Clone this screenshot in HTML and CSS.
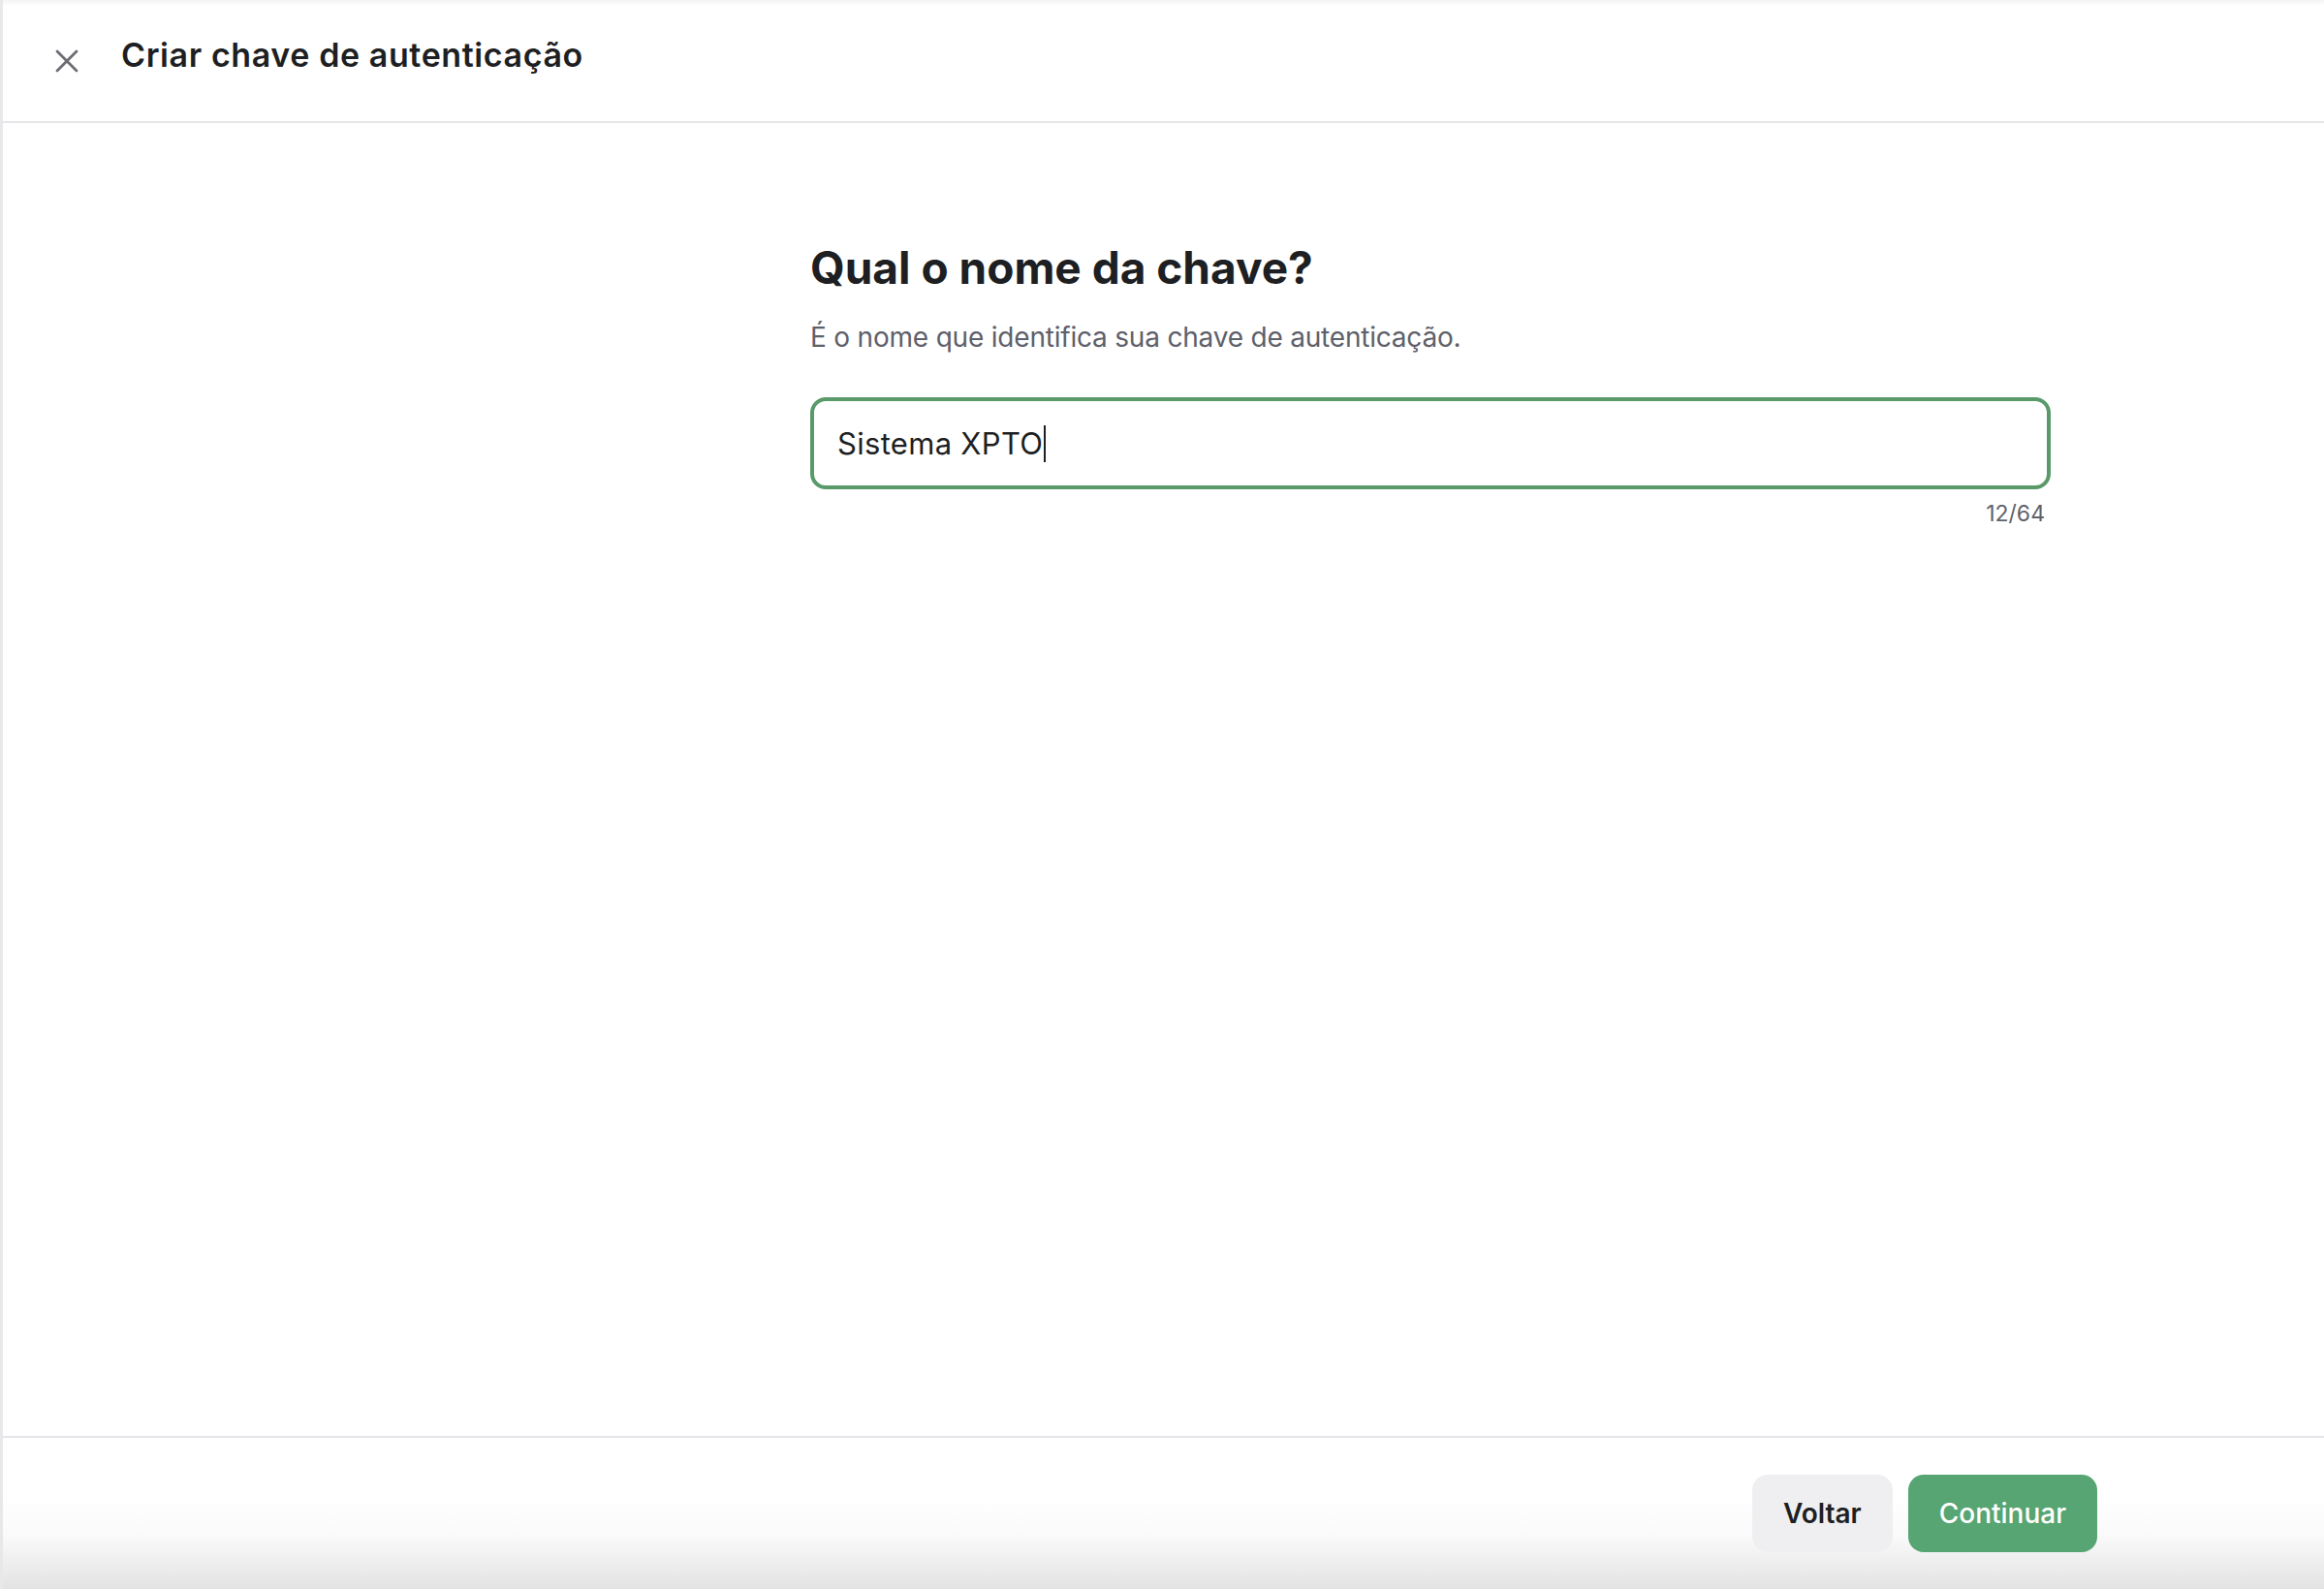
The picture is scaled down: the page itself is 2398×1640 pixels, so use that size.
FILE: index.html
```html
<!DOCTYPE html>
<html lang="pt-BR">
<head>
<meta charset="utf-8">
<title>Criar chave de autenticação</title>
<link rel="stylesheet" href="styles.css">
</head>
<body>
<div class="page">
  <header class="header">
    <button class="close" aria-label="Fechar">
      <svg viewBox="0 0 24 24" width="24" height="24"><path d="M2 2 L22 22 M22 2 L2 22" stroke="#6c6d74" stroke-width="2.8" stroke-linecap="round" fill="none"/></svg>
    </button>
    <h1 class="title">Criar chave de autenticação</h1>
  </header>
  <main class="main">
    <section class="content">
      <h2 class="heading">Qual o nome da chave?</h2>
      <p class="sub">É o nome que identifica sua chave de autenticação.</p>
      <div class="field">
        <span class="value">Sistema XPTO</span><span class="caret"></span>
      </div>
      <div class="counter">12/64</div>
    </section>
  </main>
  <footer class="footer">
    <button class="btn btn-back">Voltar</button>
    <button class="btn btn-next">Continuar</button>
  </footer>
</div>
</body>
</html>
```
FILE: styles.css
```css
* { box-sizing: border-box; }
html, body { margin: 0; padding: 0; background: #ffffff; }
body {
  font-family: Inter, "Noto Sans", "Liberation Sans", sans-serif;
  color: #1e1f23;
}
.page {
  width: 2398px;
  height: 1640px;
  display: flex;
  flex-direction: column;
  border-left: 3px solid #e8e8ea;
  background: linear-gradient(#f4f4f5 0, #ffffff 6px);
}
.header {
  height: 127px;
  flex: none;
  display: flex;
  align-items: center;
  padding: 0 0 12px 54px;
  border-bottom: 2px solid #e6e6ea;
}
.close {
  width: 24px;
  height: 24px;
  padding: 0;
  border: 0;
  background: none;
  display: flex;
  margin-top: 12px;
}
.title {
  margin: 0 0 0 44px;
  font-size: 34px;
  font-weight: 600;
  letter-spacing: 0.6px;
  color: #1e1f23;
}
.main {
  flex: 1;
  display: flex;
  padding: 0 0 0 833px;
}
.content {
  width: 1280px;
  padding-top: 117px;
}
.heading {
  margin: 0;
  font-size: 46px;
  font-weight: 700;
  line-height: 64px;
  letter-spacing: 0;
  color: #1e1f23;
}
.sub {
  margin: 20px 0 0;
  font-size: 28px;
  line-height: 40px;
  letter-spacing: -0.2px;
  color: #5e606a;
}
.field {
  margin-top: 42px;
  height: 95px;
  border: 4px solid #5a9a6a;
  border-radius: 16px;
  display: flex;
  align-items: center;
  padding: 0 0 0 24px;
  font-size: 31px;
  letter-spacing: 0.3px;
  color: #1e1f23;
}
.caret {
  width: 2px;
  height: 38px;
  background: #1e1f23;
  margin-left: 1px;
}
.counter {
  text-align: right;
  padding-right: 6px;
  margin-top: 10px;
  font-size: 23px;
  line-height: 30px;
  color: #60626b;
}
.footer {
  height: 158px;
  flex: none;
  border-top: 2px solid #e6e6ea;
  display: flex;
  justify-content: flex-end;
  align-items: flex-start;
  gap: 16px;
  padding: 38px 234px 0 0;
  background: linear-gradient(#ffffff 0, #ffffff 60px, #fafafa 100px, #e3e3e3 156px);
}
.btn {
  height: 80px;
  border: 0;
  border-radius: 16px;
  font-family: Inter, "Noto Sans", "Liberation Sans", sans-serif;
  font-size: 28px;
  font-weight: 600;
  padding: 0 32px;
}
.btn-back {
  background: #efeff1;
  color: #1e1f23;
}
.btn-next {
  background: #56a572;
  color: #ffffff;
  font-weight: 500;
}
```
